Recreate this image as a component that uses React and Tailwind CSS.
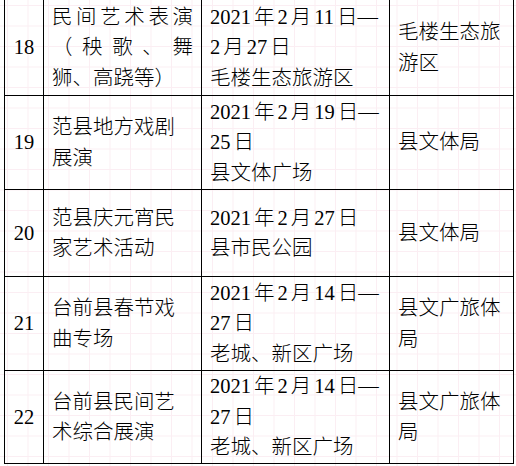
import React from "react";

const rows = [
  {
    n: "18",
    h: "h-[96px]",
    c2: [
      { t: "民间艺术表演", j: true },
      { t: "（秧歌、舞", j: true },
      { t: "狮、高跷等）" },
    ],
    c3: ["2021年2月11日—", "2月27日", "毛楼生态旅游区"],
    c4: ["毛楼生态旅", "游区"],
  },
  {
    n: "19",
    h: "h-[94px]",
    c2: [{ t: "范县地方戏剧" }, { t: "展演" }],
    c3: ["2021年2月19日—", "25日", "县文体广场"],
    c4: ["县文体局"],
  },
  {
    n: "20",
    h: "h-[87px]",
    c2: [{ t: "范县庆元宵民" }, { t: "家艺术活动" }],
    c3: ["2021年2月27日", "县市民公园"],
    c4: ["县文体局"],
  },
  {
    n: "21",
    h: "h-[94px]",
    c2: [{ t: "台前县春节戏" }, { t: "曲专场" }],
    c3: ["2021年2月14日—", "27日", "老城、新区广场"],
    c4: ["县文广旅体", "局"],
  },
  {
    n: "22",
    h: "h-[93px]",
    c2: [{ t: "台前县民间艺" }, { t: "术综合展演" }],
    c3: ["2021年2月14日—", "27日", "老城、新区广场"],
    c4: ["县文广旅体", "局"],
  },
];

function Spaced({ t }) {
  const parts = t.split(/(\d+)/).filter(Boolean);
  return parts.map((p, i) => {
    if (/^\d+$/.test(p)) {
      const left = i > 0;
      const right = i < parts.length - 1;
      let cls = "";
      if (left && right) cls = "mx-[3px]";
      else if (left) cls = "ml-[3px]";
      else if (right) cls = "mr-[3px]";
      return (
        <span key={i} className={cls}>
          {p}
        </span>
      );
    }
    return <span key={i}>{p}</span>;
  });
}

export default function App() {
  return (
    <div className="w-[516px] h-[466px] overflow-hidden bg-white bg-[linear-gradient(to_right,#fbeef3_1px,transparent_1px),linear-gradient(to_bottom,#fbeef3_1px,transparent_1px)] bg-[size:20.5px_20.5px] bg-[position:7px_5px] font-['Liberation_Serif','Noto_Sans_CJK_SC',serif] font-light text-[20.5px] leading-[30.5px] text-black">
      <div className="ml-[4px] w-[510px] border-l border-black">
        {rows.map((r) => (
          <div
            key={r.n}
            className={`grid grid-cols-[39px_158px_188px_124px] border-b border-black ${r.h}`}
          >
            <div className="border-r border-black flex items-center justify-center">
              {r.n}
            </div>
            <div className="border-r border-black flex flex-col justify-center pl-[8px] pr-[8px]">
              {r.c2.map((l, i) => (
                <div
                  key={i}
                  className={
                    l.j
                      ? "whitespace-nowrap text-justify [text-align-last:justify]"
                      : "whitespace-nowrap"
                  }
                >
                  {l.t}
                </div>
              ))}
            </div>
            <div className="border-r border-black flex flex-col justify-center pl-[8px]">
              {r.c3.map((l, i) => (
                <div key={i} className="whitespace-nowrap">
                  <Spaced t={l} />
                </div>
              ))}
            </div>
            <div className="border-r border-black flex flex-col justify-center pl-[8px]">
              {r.c4.map((l, i) => (
                <div key={i} className="whitespace-nowrap">
                  {l}
                </div>
              ))}
            </div>
          </div>
        ))}
      </div>
    </div>
  );
}
